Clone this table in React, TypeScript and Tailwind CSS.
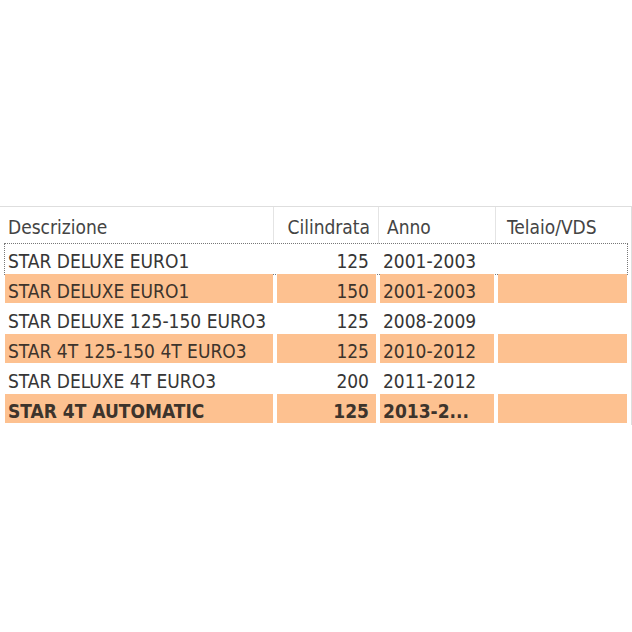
import React from 'react';

type Row = {
  descrizione: string;
  cilindrata: string;
  anno: string;
  telaio: string;
  bold?: boolean;
};

const rows: Row[] = [
  { descrizione: 'STAR DELUXE EURO1', cilindrata: '125', anno: '2001-2003', telaio: '' },
  { descrizione: 'STAR DELUXE EURO1', cilindrata: '150', anno: '2001-2003', telaio: '' },
  { descrizione: 'STAR DELUXE 125-150 EURO3', cilindrata: '125', anno: '2008-2009', telaio: '' },
  { descrizione: 'STAR 4T 125-150 4T EURO3', cilindrata: '125', anno: '2010-2012', telaio: '' },
  { descrizione: 'STAR DELUXE 4T EURO3', cilindrata: '200', anno: '2011-2012', telaio: '' },
  { descrizione: 'STAR 4T AUTOMATIC', cilindrata: '125', anno: '2013-2...', telaio: '', bold: true },
];

function HeaderRow() {
  return (
    <div className="flex h-[37px] text-[19px] text-[#444444]">
      <div className="flex w-[274px] items-center border-r border-[#e4e4e4] pl-[8px] pt-[4px]">
        Descrizione
      </div>
      <div className="flex w-[105px] items-center justify-end border-r border-[#e4e4e4] pr-[8px] pt-[4px]">
        Cilindrata
      </div>
      <div className="flex w-[117px] items-center border-r border-[#e4e4e4] pl-[8px] pt-[4px]">
        Anno
      </div>
      <div className="flex flex-1 items-center pl-[11px] pt-[4px]">Telaio/VDS</div>
    </div>
  );
}

function DataRow({ row, index }: { row: Row; index: number }) {
  const orange = index % 2 === 1;
  const cell = orange ? 'bg-[#fdc190] text-[#3d342c]' : 'bg-white text-[#363636]';
  const weight = row.bold ? 'font-bold text-[#1e1a16]' : '';

  return (
    <div
      className={
        index === 0
          ? 'flex h-[30px] gap-[4px] outline-1 outline-dotted outline-[#777777]'
          : 'flex h-[30px] gap-[4px]'
      }
    >
      <div className={`flex h-[29px] w-[268px] items-center pl-[3px] pt-[6px] ${cell} ${weight}`}>
        {row.descrizione}
      </div>
      <div className={`flex h-[29px] w-[99px] items-center justify-end pr-[7px] pt-[6px] ${cell} ${weight}`}>
        {row.cilindrata}
      </div>
      <div className={`flex h-[29px] w-[114px] items-center pl-[3px] pt-[6px] ${cell} ${weight}`}>
        {row.anno}
      </div>
      <div className={`flex h-[29px] flex-1 items-center pt-[6px] ${cell} ${weight}`}>{row.telaio}</div>
    </div>
  );
}

export default function App() {
  return (
    <div
      className="h-[632px] w-[632px] overflow-hidden bg-white pt-[206px]"
      style={{ fontFamily: "Tahoma, 'DejaVu Sans Condensed', 'DejaVu Sans', sans-serif" }}
    >
      <div className="border-t border-r border-[#dedede]">
        <HeaderRow />
        <div className="flex flex-col pl-[5px] pr-[4px] pb-[1px] text-[19px] leading-none">
          {rows.map((row, i) => (
            <DataRow key={i} row={row} index={i} />
          ))}
        </div>
      </div>
    </div>
  );
}
